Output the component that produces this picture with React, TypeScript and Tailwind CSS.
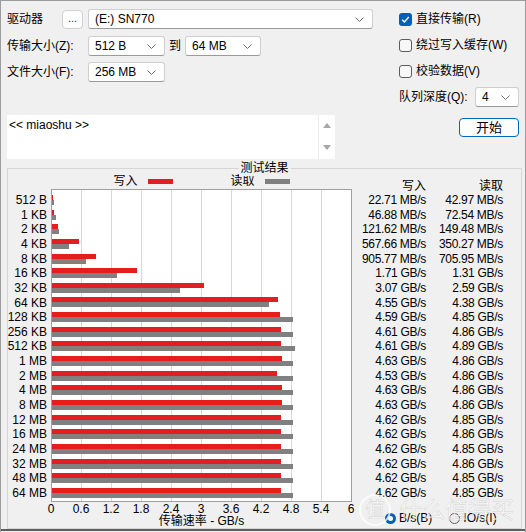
import React from 'react';

type Row = [string, number, number, string, string];

// label, write GB/s, read GB/s, write text, read text
const rows: Row[] = [
  ['512 B', 0.0222, 0.042, '22.71 MB/s', '42.97 MB/s'],
  ['1 KB', 0.0458, 0.0708, '46.88 MB/s', '72.54 MB/s'],
  ['2 KB', 0.1188, 0.146, '121.62 MB/s', '149.48 MB/s'],
  ['4 KB', 0.5544, 0.342, '567.66 MB/s', '350.27 MB/s'],
  ['8 KB', 0.8846, 0.6894, '905.77 MB/s', '705.95 MB/s'],
  ['16 KB', 1.71, 1.31, '1.71 GB/s', '1.31 GB/s'],
  ['32 KB', 3.07, 2.59, '3.07 GB/s', '2.59 GB/s'],
  ['64 KB', 4.55, 4.38, '4.55 GB/s', '4.38 GB/s'],
  ['128 KB', 4.59, 4.85, '4.59 GB/s', '4.85 GB/s'],
  ['256 KB', 4.61, 4.86, '4.61 GB/s', '4.86 GB/s'],
  ['512 KB', 4.61, 4.89, '4.61 GB/s', '4.89 GB/s'],
  ['1 MB', 4.63, 4.86, '4.63 GB/s', '4.86 GB/s'],
  ['2 MB', 4.53, 4.86, '4.53 GB/s', '4.86 GB/s'],
  ['4 MB', 4.63, 4.86, '4.63 GB/s', '4.86 GB/s'],
  ['8 MB', 4.63, 4.86, '4.63 GB/s', '4.86 GB/s'],
  ['12 MB', 4.62, 4.85, '4.62 GB/s', '4.85 GB/s'],
  ['16 MB', 4.62, 4.86, '4.62 GB/s', '4.86 GB/s'],
  ['24 MB', 4.62, 4.85, '4.62 GB/s', '4.85 GB/s'],
  ['32 MB', 4.62, 4.86, '4.62 GB/s', '4.86 GB/s'],
  ['48 MB', 4.62, 4.85, '4.62 GB/s', '4.85 GB/s'],
  ['64 MB', 4.62, 4.85, '4.62 GB/s', '4.85 GB/s'],
];

const ticks = ['0', '0.6', '1.2', '1.8', '2.4', '3', '3.6', '4.2', '4.8', '5.4', '6'];

const gridLines = [
  'left-[29px]', 'left-[59px]', 'left-[89px]', 'left-[119px]', 'left-[149px]',
  'left-[179px]', 'left-[209px]', 'left-[239px]', 'left-[269px]',
];

const PX_PER_GB = 49.6;

function Chevron() {
  return (
    <svg width="9" height="5" viewBox="0 0 9 5" className="shrink-0">
      <path d="M0.5 0.5 L4.5 4.5 L8.5 0.5" fill="none" stroke="#6b6b6b" strokeWidth="1" />
    </svg>
  );
}

function Select({ value, className }: { value: string; className: string }) {
  return (
    <div
      className={`h-[20px] bg-white border border-[#cfcfcf] border-b-[#9a9a9a] rounded-[3px] flex items-center justify-between pl-[6px] pr-[8px] ${className}`}
    >
      <span>{value}</span>
      <Chevron />
    </div>
  );
}

function Check({ checked, label }: { checked: boolean; label: string }) {
  return (
    <div className="h-[20px] flex items-center">
      {checked ? (
        <div className="w-[13px] h-[13px] rounded-[3px] bg-[#005fb8] flex items-center justify-center">
          <svg width="11" height="11" viewBox="0 0 11 11">
            <path d="M2.2 5.8 L4.4 8 L8.8 3" fill="none" stroke="white" strokeWidth="1.3" />
          </svg>
        </div>
      ) : (
        <div className="w-[13px] h-[13px] rounded-[3px] border border-[#5c5c5c] bg-[#f7f7f7]" />
      )}
      <span className="ml-[4px]">{label}</span>
    </div>
  );
}

export default function App() {
  return (
    <div className="w-[526px] h-[532px] bg-[#f0f0f0] border-l border-t border-r border-[#9c9c9c] flex flex-col text-[12px] leading-[16px] text-black relative overflow-hidden font-['Liberation_Sans','Noto_Sans_CJK_SC',sans-serif]">
      {/* settings */}
      <div className="flex pt-[8px] pl-[6px]">
        <div className="w-[366px] flex flex-col">
          <div className="h-[20px] flex items-center">
            <span className="w-[55px]">驱动器</span>
            <button className="w-[21px] h-[19px] bg-[#fdfdfd] border border-[#d0d0d0] rounded-[4px] flex items-center justify-center text-[11px] text-[#333] pb-[3px]">
              ...
            </button>
            <Select className="ml-[5px] w-[285px]" value="(E:) SN770" />
          </div>
          <div className="h-[20px] mt-[7px] flex items-center">
            <span className="w-[81px]">传输大小(Z):</span>
            <Select className="w-[77px]" value="512 B" />
            <span className="w-[20px] text-center">到</span>
            <Select className="w-[76px]" value="64 MB" />
          </div>
          <div className="h-[20px] mt-[6px] flex items-center">
            <span className="w-[81px]">文件大小(F):</span>
            <Select className="w-[77px]" value="256 MB" />
          </div>
          <div className="mt-[33px] w-[328px] h-[44px] bg-white flex">
            <div className="flex-1 px-[2px] pt-[2px]">&lt;&lt; miaoshu &gt;&gt;</div>
            <div className="w-[17px] border-l border-[#ececec] flex flex-col items-center justify-between pt-[8px] pb-[9px]">
              <svg width="8" height="5" viewBox="0 0 8 5">
                <path d="M0 5 L4 0 L8 5 Z" fill="#a6a6a6" />
              </svg>
              <svg width="8" height="5" viewBox="0 0 8 5">
                <path d="M0 0 L4 5 L8 0 Z" fill="#a6a6a6" />
              </svg>
            </div>
          </div>
        </div>

        <div className="ml-[26px] w-[121px] flex flex-col">
          <Check checked label="直接传输(R)" />
          <div className="mt-[6px]">
            <Check checked={false} label="绕过写入缓存(W)" />
          </div>
          <div className="mt-[6px]">
            <Check checked={false} label="校验数据(V)" />
          </div>
          <div className="mt-[6px] h-[20px] flex items-center">
            <span className="w-[76px]">队列深度(Q):</span>
            <Select className="w-[44px]" value="4" />
          </div>
          <button className="mt-[11px] ml-auto mr-[1px] w-[60px] h-[19px] bg-[#fdfdfd] border border-[#0067c0] rounded-[4px] flex items-center justify-center text-[13px]">
            开始
          </button>
        </div>
      </div>

      {/* results */}
      <div className="mt-[9px] ml-[6px] w-[515px] h-[361px] border border-[#d6d6d6] relative flex">
        <div className="absolute top-[-9px] left-1/2 -translate-x-1/2 px-[2px] bg-[#f0f0f0] leading-[16px]">
          测试结果
        </div>

        <div className="w-[43px] pt-[23.7px] flex flex-col">
          {rows.map((r) => (
            <div key={r[0]} className="h-[14.65px] flex items-center justify-end pr-[4px] whitespace-nowrap">
              {r[0]}
            </div>
          ))}
        </div>

        <div className="w-[301px] flex flex-col">
          <div className="h-[20px] pt-[4px] flex items-center justify-center">
            <span>写入</span>
            <span className="ml-[10px] w-[25px] h-[5px] bg-[#e41e1e]" />
            <span className="ml-[58px]">读取</span>
            <span className="ml-[10px] w-[25px] h-[5px] bg-[#808080]" />
          </div>
          <div className="relative h-[313px] bg-white border border-[#a0a0a0] pt-[2.7px]">
            {gridLines.map((g) => (
              <div key={g} className={`absolute top-0 bottom-0 w-px bg-[#d8d8d8] ${g}`} />
            ))}
            <div className="relative flex flex-col">
              {rows.map((r) => (
                <div key={r[0]} className="h-[14.65px] flex flex-col justify-center">
                  <div className="h-[5px] bg-[#e41e1e]" style={{ width: Math.max(1, r[1] * PX_PER_GB) }} />
                  <div className="h-[5px] bg-[#808080]" style={{ width: Math.max(1, r[2] * PX_PER_GB) }} />
                </div>
              ))}
            </div>
          </div>
          <div className="h-[11px] mt-[1px] -ml-[15px] flex">
            {ticks.map((t) => (
              <div key={t} className="w-[30px] shrink-0 text-center leading-[13px]">
                {t}
              </div>
            ))}
          </div>
          <div className="h-[14px] text-center leading-[14px]">传输速率 - GB/s</div>
        </div>

        <div className="flex-1 pt-[10.35px] flex flex-col">
          <div className="h-[13.35px] flex items-center">
            <span className="w-[74px] text-right">写入</span>
            <span className="w-[77px] text-right">读取</span>
          </div>
          {rows.map((r) => (
            <div key={r[0]} className="h-[14.65px] flex items-center tracking-[-0.3px] whitespace-nowrap">
              <span className="w-[74px] text-right">{r[3]}</span>
              <span className="w-[77px] text-right">{r[4]}</span>
            </div>
          ))}
          <div className="mt-[12px] h-[12px] ml-[33px] flex items-center">
            <div className="w-[11px] h-[11px] rounded-full bg-[#005fb8] flex items-center justify-center">
              <div className="w-[5px] h-[5px] rounded-full bg-white" />
            </div>
            <span className="ml-[3px]">B/s(B)</span>
            <div className="ml-[17px] w-[11px] h-[11px] rounded-full border border-[#5c5c5c]" />
            <span className="ml-[3px]">IO/s(I)</span>
          </div>
        </div>
      </div>
      <div className="h-[2px] bg-[#5e5e5e]" />

      {/* watermark */}
      <div className="absolute left-[358px] top-[493px] flex items-center pointer-events-none">
        <div className="w-[32px] h-[32px] rounded-full border-2 border-[rgba(255,255,255,0.75)] flex items-center justify-center text-[20px] text-[rgba(255,255,255,0.75)] [-webkit-text-stroke:0.5px_rgba(120,120,120,0.3)]">
          值
        </div>
        <span className="ml-[8px] text-[23px] leading-[28px] text-[rgba(255,255,255,0.65)] [-webkit-text-stroke:0.5px_rgba(120,120,120,0.3)]">
          什么值得买
        </span>
      </div>
    </div>
  );
}
